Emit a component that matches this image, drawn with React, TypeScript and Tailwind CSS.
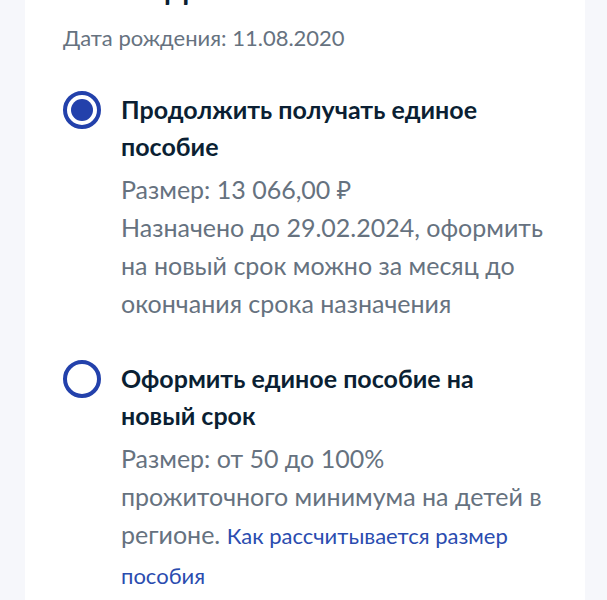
import { ReactNode } from "react";

function Radio({ checked }: { checked?: boolean }) {
  return (
    <div className="w-[38px] h-[38px] shrink-0 rounded-full border-[4px] border-[#2341ab] flex items-center justify-center">
      {checked && <div className="w-[22px] h-[22px] rounded-full bg-[#2341ab]" />}
    </div>
  );
}

function Option({
  checked,
  title,
  children,
}: {
  checked?: boolean;
  title: string;
  children: ReactNode;
}) {
  return (
    <div className="flex gap-[20px]">
      <Radio checked={checked} />
      <div className="flex-1">
        <div className="text-[25px] leading-[37px] font-bold text-[#0b1f33]">
          {title}
        </div>
        <div className="mt-[5px] text-[25px] leading-[38px] text-[#66727f]">
          {children}
        </div>
      </div>
    </div>
  );
}

export default function App() {
  return (
    <div
      className="min-h-screen bg-[#f6f7fb] pl-[25px] pr-[22px] flex flex-col overflow-hidden"
      style={{ fontFamily: "Lato, 'Noto Sans', sans-serif" }}
    >
      <div className="bg-white flex-1 pl-[38px] pr-[36px] flex flex-col">
        <div className="-mt-[27px] text-[28px] leading-[32px] font-bold text-[#0b1f33] whitespace-nowrap">
          Иванов Даниил
        </div>
        <div className="mt-[14px] text-[22px] leading-[38px] text-[#66727f]">
          Дата рождения: 11.08.2020
        </div>

        <div className="mt-[34px] flex flex-col gap-[38px]">
          <Option checked title="Продолжить получать единое пособие">
            <div>Размер: 13 066,00 ₽</div>
            <div>
              Назначено до 29.02.2024, оформить на новый срок можно за месяц до
              окончания срока назначения
            </div>
          </Option>
          <Option title="Оформить единое пособие на новый срок">
            Размер: от 50 до 100% прожиточного минимума на детей в регионе.{" "}
            <a href="#" className="text-[22px] text-[#2a4caf]">
              Как рассчитывается размер пособия
            </a>
          </Option>
        </div>
      </div>
    </div>
  );
}
